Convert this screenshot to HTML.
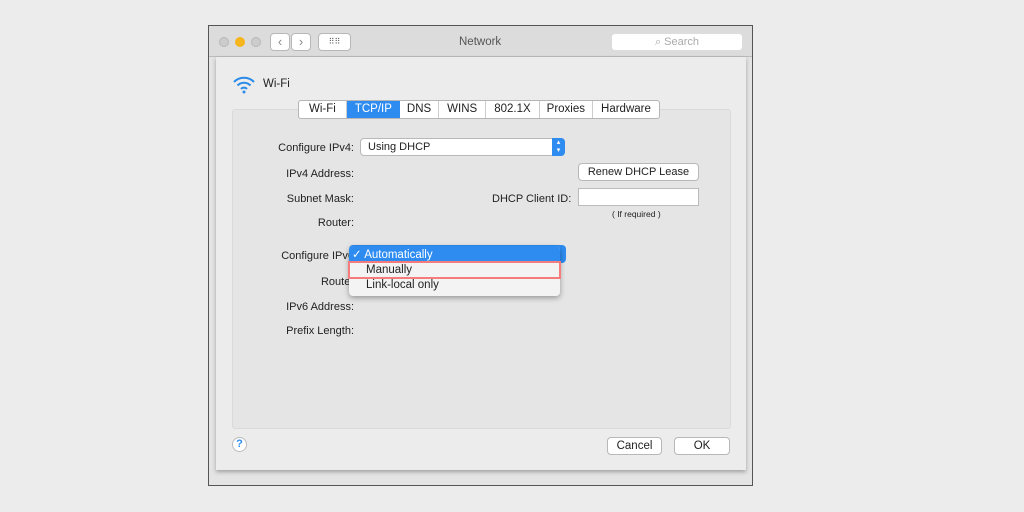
<!DOCTYPE html><html><head><style>
body{margin:0;width:1024px;height:512px;background:#ececec;font-family:"Liberation Sans",sans-serif;font-size:11px;color:#222;position:relative;overflow:hidden}
.a{position:absolute}
.lbl{position:absolute;text-align:right;width:120px}
.btn{position:absolute;background:#fff;border:1px solid #b8b8b8;border-radius:4px;text-align:center;box-sizing:border-box}
</style></head><body>
<div class="a" style="left:208px;top:25px;width:545px;height:461px;border:1px solid #555;box-sizing:border-box;background:#e4e4e4"></div>
<div class="a" style="left:209px;top:26px;width:543px;height:30px;background:#dcdcdc;border-bottom:1px solid #bcbcbc"></div>
<div class="a" style="left:219px;top:37px;width:10px;height:10px;border-radius:50%;background:#ccc;border:1px solid #b8b8b8;box-sizing:border-box"></div>
<div class="a" style="left:235px;top:37px;width:10px;height:10px;border-radius:50%;background:#f6b51c"></div>
<div class="a" style="left:251px;top:37px;width:10px;height:10px;border-radius:50%;background:#ccc;border:1px solid #b8b8b8;box-sizing:border-box"></div>
<div class="btn" style="left:270px;top:33px;width:20px;height:18px;color:#888;font-size:13px;line-height:16px">‹</div>
<div class="btn" style="left:291px;top:33px;width:20px;height:18px;color:#888;font-size:13px;line-height:16px">›</div>
<div class="btn" style="left:318px;top:33px;width:33px;height:18px;color:#666;font-size:8px;line-height:16px">⠿⠿</div>
<div class="a" style="left:459px;top:36px;color:#555;font-size:11.5px">Network</div>
<div class="btn" style="left:611px;top:33px;width:132px;height:18px;border-color:#ddd;color:#aaa;line-height:17px">⌕ Search</div>
<div class="a" style="left:216px;top:57px;width:530px;height:413px;background:#ececec;box-shadow:0 2px 4px rgba(0,0,0,.3)"></div>
<svg class="a" style="left:232px;top:74px" width="24" height="20" viewBox="0 0 24 20"><g fill="none" stroke="#2a8be8" stroke-width="2"><path d="M2 8a14 14 0 0 1 20 0"/><path d="M5.5 11.5a9 9 0 0 1 13 0"/><path d="M9 15a4 4 0 0 1 6 0"/></g><circle cx="12" cy="18" r="1.5" fill="#2a8be8"/></svg>
<div class="a" style="left:263px;top:78px;font-size:11.5px">Wi-Fi</div>
<div class="a" style="left:232px;top:109px;width:499px;height:320px;background:#e5e5e5;border:1px solid #dadada;border-radius:3px;box-sizing:border-box"></div>
<div class="a" style="left:298px;top:100px;height:17px;display:flex;border:1px solid #b5b5b5;border-radius:3px;background:#fff;font-size:11.5px;line-height:17px;overflow:hidden">
<div style="padding:0 10px;border-right:1px solid #ccc">Wi-Fi</div>
<div style="padding:0 8px;background:#2e8cf0;color:#fff">TCP/IP</div>
<div style="padding:0 7px;border-right:1px solid #ccc">DNS</div>
<div style="padding:0 8px;border-right:1px solid #ccc">WINS</div>
<div style="padding:0 8px;border-right:1px solid #ccc">802.1X</div>
<div style="padding:0 7px;border-right:1px solid #ccc">Proxies</div>
<div style="padding:0 8px">Hardware</div></div>
<div class="lbl" style="left:234px;top:142px">Configure IPv4:</div>
<div class="btn" style="left:360px;top:138px;width:205px;height:18px;line-height:17px;text-align:left;padding-left:7px">Using DHCP</div>
<div class="a" style="left:552px;top:138px;width:13px;height:18px;background:#2e8cf0;border-radius:0 4px 4px 0;color:#fff;font-size:7px;text-align:center;line-height:8px;padding-top:1px;box-sizing:border-box">▴<br>▾</div>
<div class="lbl" style="left:234px;top:168px">IPv4 Address:</div>
<div class="lbl" style="left:234px;top:193px">Subnet Mask:</div>
<div class="lbl" style="left:234px;top:217px">Router:</div>
<div class="btn" style="left:578px;top:163px;width:121px;height:18px;line-height:17px">Renew DHCP Lease</div>
<div class="a" style="left:492px;top:193px">DHCP Client ID:</div>
<div class="a" style="left:578px;top:188px;width:121px;height:18px;background:#fff;border:1px solid #bbb;box-sizing:border-box"></div>
<div class="a" style="left:612px;top:209px;font-size:8.5px">( If required )</div>
<div class="lbl" style="left:234px;top:250px">Configure IPv6</div>
<div class="lbl" style="left:234px;top:276px">Router</div>
<div class="lbl" style="left:234px;top:301px">IPv6 Address:</div>
<div class="lbl" style="left:234px;top:325px">Prefix Length:</div>
<div class="a" style="left:349px;top:245px;width:217px;height:18px;background:#2e8cf0;border-radius:4px"></div>
<div class="a" style="left:349px;top:246px;width:211px;height:50px;background:#f3f3f3;border-radius:4px;box-shadow:0 2px 6px rgba(0,0,0,.35)"></div>
<div class="a" style="left:349px;top:246px;width:211px;height:15px;background:#2e8cf0;border-radius:4px 4px 0 0;color:#fff;line-height:19px;font-size:11.5px;padding-left:3px;box-sizing:border-box;overflow:hidden">✓ Automatically</div>
<div class="a" style="left:348px;top:261px;width:213px;height:18px;border:2px solid #f47c7c;box-sizing:border-box"></div>
<div class="a" style="left:366px;top:264px;font-size:11.5px">Manually</div>
<div class="a" style="left:366px;top:279px;font-size:11.5px">Link-local only</div>
<div class="a" style="left:232px;top:437px;width:15px;height:15px;border-radius:50%;background:#fff;border:1px solid #bbb;box-sizing:border-box;color:#2e8cf0;text-align:center;font-size:11px;line-height:13px;font-weight:bold">?</div>
<div class="btn" style="left:607px;top:437px;width:55px;height:18px;line-height:17px;font-size:11.5px">Cancel</div>
<div class="btn" style="left:674px;top:437px;width:56px;height:18px;line-height:17px;font-size:11.5px">OK</div>
</body></html>
